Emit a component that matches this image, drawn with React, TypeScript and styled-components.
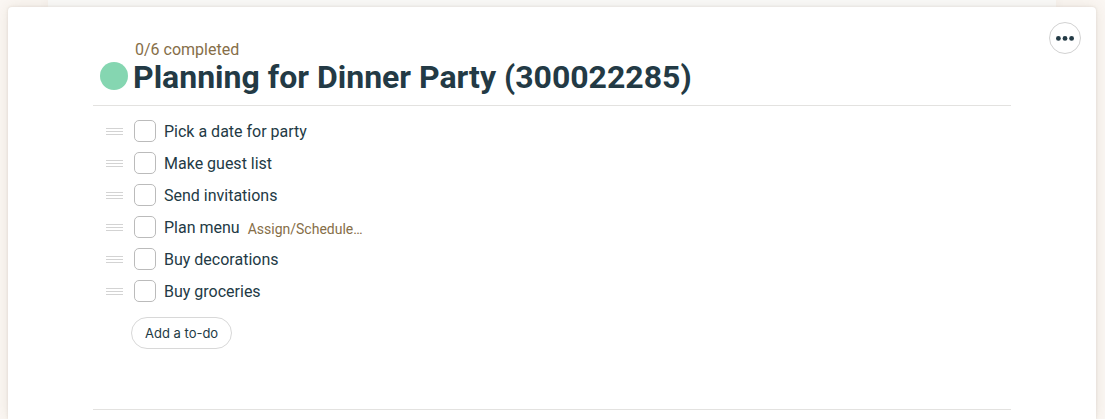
import React from "react";
import styled, { createGlobalStyle } from "styled-components";

const ink = "#233a45";
const tan = "#866e48";

const GlobalStyle = createGlobalStyle`
  *, *::before, *::after { box-sizing: border-box; }
  body {
    margin: 0;
    background: #fbf7f3;
    color: ${ink};
    font-family: Roboto, "Liberation Sans", sans-serif;
    font-size: 16px;
    -webkit-font-smoothing: antialiased;
  }
`;

const Page = styled.div`
  display: flex;
  flex-direction: column;
  min-height: 100vh;
  padding: 0 9px 0 8px;
  overflow: hidden;
`;

const BackSheet = styled.div`
  height: 7px;
  margin: 0 40px;
  background: #fbfbfa;
  box-shadow: 0 0 12px rgba(90, 60, 30, 0.08);
`;

const Card = styled.main`
  position: relative;
  flex: 1;
  padding: 33px 85px 9px;
  background: #fff;
  border-radius: 4px 4px 0 0;
  box-shadow: 0 0 3px rgba(90, 70, 50, 0.14), 0 0 16px rgba(90, 60, 30, 0.1);
`;

const MenuButton = styled.button`
  position: absolute;
  top: 15px;
  right: 15px;
  display: flex;
  align-items: center;
  justify-content: center;
  width: 32px;
  height: 32px;
  padding: 0;
  border: 1px solid #d2d2d2;
  border-radius: 50%;
  background: #fff;
  color: ${ink};
  cursor: pointer;
`;

const Header = styled.header`
  display: grid;
  grid-template-columns: 28px 1fr;
  column-gap: 5px;
  align-items: center;
  padding: 0 0 11px 7px;
  border-bottom: 1px solid #e3e2e0;
`;

const Progress = styled.a`
  grid-column: 2;
  justify-self: start;
  padding-left: 2px;
  color: ${tan};
  line-height: 20px;
  text-decoration: none;
`;

const Dot = styled.span`
  align-self: start;
  width: 28px;
  height: 28px;
  margin-top: 2px;
  border-radius: 50%;
  background: #85d6b1;
`;

const Title = styled.h1`
  margin: 0;
  font-size: 32px;
  line-height: 34px;
  font-weight: 700;
`;

const List = styled.ul`
  margin: 0;
  padding: 9px 0 0 13px;
  list-style: none;
`;

const Row = styled.li`
  display: flex;
  align-items: center;
  height: 32px;
`;

const Handle = styled.svg`
  width: 17px;
  height: 7px;
  margin-right: 11px;
  stroke: #d3d3d3;
`;

const Label = styled.label`
  display: flex;
  align-items: center;
  gap: 8px;
  line-height: 20px;
`;

const LabelText = styled.span`
  padding-top: 2px;
`;

const Checkbox = styled.input`
  appearance: none;
  width: 22px;
  height: 22px;
  margin: 0;
  border: 1px solid #bbb;
  border-radius: 5px;
  background: #fff;
`;

const Assign = styled.a`
  margin-left: 8px;
  padding-top: 3px;
  color: ${tan};
  font-size: 14px;
  line-height: 20px;
  text-decoration: none;
`;

const AddButton = styled.button`
  display: block;
  height: 32px;
  margin: 10px 0 60px 38px;
  padding: 0 13px;
  border: 1px solid #d8d8d8;
  border-radius: 16px;
  background: #fff;
  color: ${ink};
  font: 400 13px Inter, "Liberation Sans", sans-serif;
  cursor: pointer;
`;

const Divider = styled.hr`
  margin: 0;
  border: 0;
  border-top: 1px solid #e3e2e0;
`;

const todos = [
  { text: "Pick a date for party" },
  { text: "Make guest list" },
  { text: "Send invitations" },
  { text: "Plan menu", action: "Assign/Schedule…" },
  { text: "Buy decorations" },
  { text: "Buy groceries" },
];

export default function App() {
  return (
    <>
      <GlobalStyle />
      <Page>
        <BackSheet />
        <Card>
          <MenuButton type="button" aria-label="Menu">
            <svg width="18" height="6" viewBox="0 0 18 6" fill="currentColor">
              <circle cx="2.4" cy="3.4" r="2.4" />
              <circle cx="9" cy="3.4" r="2.4" />
              <circle cx="15.6" cy="3.4" r="2.4" />
            </svg>
          </MenuButton>
          <Header>
            <Progress href="#">0/6 completed</Progress>
            <Dot />
            <Title>Planning for Dinner Party (300022285)</Title>
          </Header>
          <List>
            {todos.map(({ text, action }) => (
              <Row key={text}>
                <Handle viewBox="0 0 17 7" aria-hidden="true">
                  <path d="M0 .5h17M0 3.5h17M0 6.5h17" />
                </Handle>
                <Label>
                  <Checkbox type="checkbox" />
                  <LabelText>{text}</LabelText>
                </Label>
                {action && <Assign href="#">{action}</Assign>}
              </Row>
            ))}
          </List>
          <AddButton type="button">Add a to-do</AddButton>
          <Divider />
        </Card>
      </Page>
    </>
  );
}
